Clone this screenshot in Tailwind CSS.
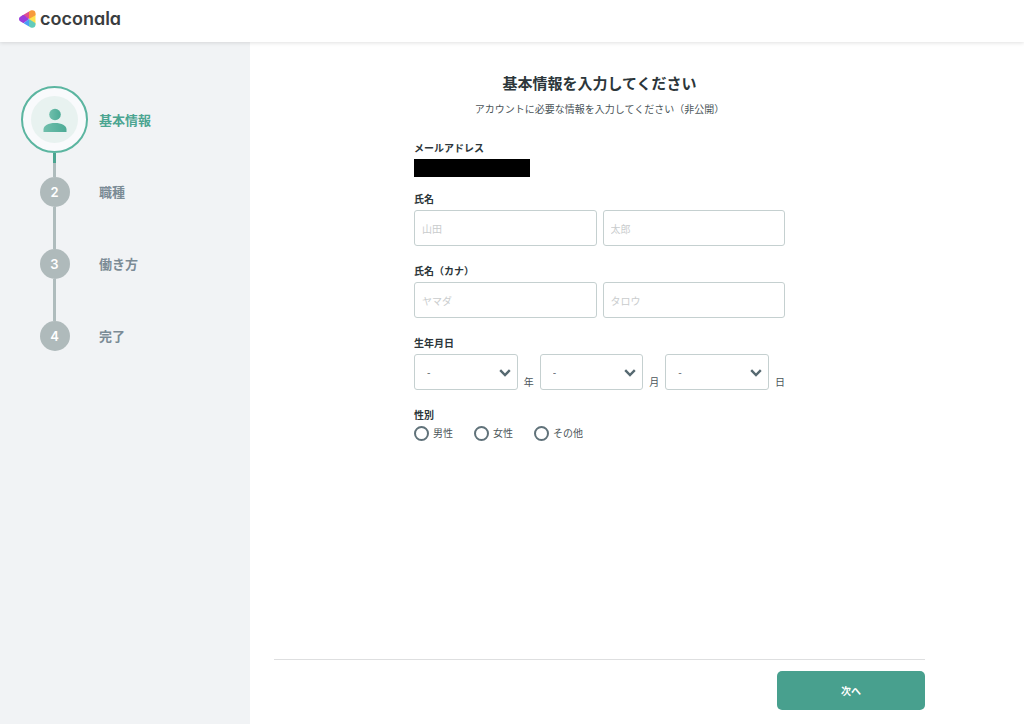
<!DOCTYPE html>
<html lang="ja">
<head>
<meta charset="utf-8">
<meta name="viewport" content="width=device-width, initial-scale=1">
<title>基本情報 - coconala</title>
<script src="https://cdn.jsdelivr.net/npm/@tailwindcss/browser@4"></script>
</head>
<body class="flex min-h-screen flex-col bg-white font-['Noto_Sans_CJK_JP',sans-serif] text-[10px] leading-4 text-[#4b5559]">
<header class="z-10 flex h-[42px] shrink-0 items-center bg-white px-[19px] pb-1 shadow-[0_1px_4px_rgba(0,0,0,0.12)]">
  <a href="#" class="flex items-center gap-1" aria-label="coconala">
    <svg class="h-[18px] w-[17px]" viewBox="0 0 17 18" aria-hidden="true">
      <defs><clipPath id="mark"><path d="M1.6 6.5 11.7.6C14-.6 16.5.8 16.5 3.3V14.8C16.5 17.3 14 18.6 11.7 17.4L1.6 11.6C-.5 10.3-.5 7.7 1.6 6.5Z"/></clipPath></defs>
      <g clip-path="url(#mark)">
        <path fill="#ffe14f" d="M10 9 17 3V15Z"/>
        <path fill="#e0508f" d="M0 6 10.200 0V9L5 6.300Z"/>
        <path fill="#f79a3c" d="M10 0H17V5L10 9Z"/>
        <path fill="#9a3ddb" d="M0 5.500 4.500 4.800 10 9 4.500 13.200 0 13Z"/>
        <path fill="#4a9df5" d="M4.500 13.200 10 9V18H6Z"/>
        <path fill="#62cbbb" d="M10 9 17 13.500V18H10Z"/>
      </g>
    </svg>
    <span class="font-['Inter',sans-serif] text-[18px] leading-5 font-semibold text-[#3a3d40] [font-feature-settings:'cv11']">coconala</span>
  </a>
</header>
<div class="flex flex-1">
  <nav class="w-[250px] shrink-0 bg-[#f1f3f5] pt-[42px] pl-[21px] text-[13px] font-bold text-[#7b8b95]" aria-label="登録ステップ">
    <ol>
      <li class="flex h-[72px] items-center gap-[11px] text-[#4ba591]" aria-current="step">
        <div class="flex h-full w-[67px] flex-col items-center pt-[2px]">
          <span class="flex size-[67px] shrink-0 items-center justify-center rounded-full border-2 border-[#5bb5a0] bg-[#f9fafc]">
            <span class="flex size-[47px] items-center justify-center rounded-full bg-[#e8f2f0]">
              <svg class="h-6 w-6" viewBox="0 0 24 24" aria-hidden="true">
                <defs><linearGradient id="person" x1="0" x2="1"><stop stop-color="#70bfac"/><stop offset="1" stop-color="#4dab96"/></linearGradient></defs>
                <circle cx="12" cy="6.500" r="5.800" fill="url(#person)"/>
                <path fill="url(#person)" d="M.500 24V21.500C.500 17.500 5.500 15 12 15S23.500 17.500 23.500 21.500V24Z"/>
              </svg>
            </span>
          </span>
          <span class="w-[3px] flex-1 bg-[#4ba591]"></span>
        </div>
        基本情報
      </li>
      <li class="flex h-[72px] items-center gap-[11px]">
        <div class="flex h-full w-[67px] flex-col items-center">
          <span class="h-[7px] w-[3px] bg-[#4ba591]"></span>
          <span class="w-[3px] flex-1 bg-[#afbcbd]"></span>
          <span class="flex size-[30px] items-center justify-center rounded-full bg-[#afbabb] font-['Inter',sans-serif] font-semibold text-white">2</span>
          <span class="h-[21px] w-[3px] bg-[#afbcbd]"></span>
        </div>
        職種
      </li>
      <li class="flex h-[72px] items-center gap-[11px]">
        <div class="flex h-full w-[67px] flex-col items-center">
          <span class="w-[3px] flex-1 bg-[#afbcbd]"></span>
          <span class="flex size-[30px] items-center justify-center rounded-full bg-[#afbabb] font-['Inter',sans-serif] font-semibold text-white">3</span>
          <span class="h-[21px] w-[3px] bg-[#afbcbd]"></span>
        </div>
        働き方
      </li>
      <li class="flex h-[72px] items-center gap-[11px]">
        <div class="flex h-full w-[67px] flex-col items-center">
          <span class="h-[21px] w-[3px] bg-[#afbcbd]"></span>
          <span class="flex size-[30px] items-center justify-center rounded-full bg-[#afbabb] font-['Inter',sans-serif] font-semibold text-white">4</span>
        </div>
        完了
      </li>
    </ol>
  </nav>
  <main class="min-w-0 flex-1 px-6">
    <form class="flex h-full max-w-[651px] flex-col">
      <div class="flex-1 pt-[29px]">
        <h1 class="text-center text-[15px] leading-6 font-bold text-[#2c363a]">基本情報を入力してください</h1>
        <p class="mt-[6px] text-center">アカウントに必要な情報を入力してください（非公開）</p>
        <div class="mx-auto mt-[23px] max-w-[371px]">
          <div>
            <div class="font-bold text-[#2c363a]">メールアドレス</div>
            <div class="mt-[3px] h-[18px] w-[116px] bg-black"></div>
          </div>
          <fieldset class="mt-[14px]">
            <legend class="font-bold text-[#2c363a]">氏名</legend>
            <div class="mt-[3px] flex gap-[6px]">
              <input type="text" aria-label="姓" placeholder="山田" class="h-9 w-full min-w-0 rounded-[3px] border border-[#c5d0d0] px-[7px] placeholder:text-[#c9cccd]">
              <input type="text" aria-label="名" placeholder="太郎" class="h-9 w-full min-w-0 rounded-[3px] border border-[#c5d0d0] px-[7px] placeholder:text-[#c9cccd]">
            </div>
          </fieldset>
          <fieldset class="mt-[17px]">
            <legend class="font-bold text-[#2c363a]">氏名（カナ）</legend>
            <div class="mt-[3px] flex gap-[6px]">
              <input type="text" aria-label="セイ" placeholder="ヤマダ" class="h-9 w-full min-w-0 rounded-[3px] border border-[#c5d0d0] px-[7px] placeholder:text-[#c9cccd]">
              <input type="text" aria-label="メイ" placeholder="タロウ" class="h-9 w-full min-w-0 rounded-[3px] border border-[#c5d0d0] px-[7px] placeholder:text-[#c9cccd]">
            </div>
          </fieldset>
          <fieldset class="mt-[17px]">
            <legend class="font-bold text-[#2c363a]">生年月日</legend>
            <div class="mt-[3px] flex gap-[6px]">
              <label class="flex flex-1 items-end gap-[6px]">
                <span class="relative flex-1">
                  <select class="block h-9 w-full appearance-none rounded-[3px] border border-[#c5d0d0] bg-white px-3"><option>-</option></select>
                  <svg class="pointer-events-none absolute top-[15px] right-[7px] h-2 w-3" viewBox="0 0 12 8" fill="none" stroke="#566971" stroke-width="2.400" aria-hidden="true"><path d="M1.200 1.200 6 6 10.800 1.200"/></svg>
                </span>年
              </label>
              <label class="flex flex-1 items-end gap-[6px]">
                <span class="relative flex-1">
                  <select class="block h-9 w-full appearance-none rounded-[3px] border border-[#c5d0d0] bg-white px-3"><option>-</option></select>
                  <svg class="pointer-events-none absolute top-[15px] right-[7px] h-2 w-3" viewBox="0 0 12 8" fill="none" stroke="#566971" stroke-width="2.400" aria-hidden="true"><path d="M1.200 1.200 6 6 10.800 1.200"/></svg>
                </span>月
              </label>
              <label class="flex flex-1 items-end gap-[6px]">
                <span class="relative flex-1">
                  <select class="block h-9 w-full appearance-none rounded-[3px] border border-[#c5d0d0] bg-white px-3"><option>-</option></select>
                  <svg class="pointer-events-none absolute top-[15px] right-[7px] h-2 w-3" viewBox="0 0 12 8" fill="none" stroke="#566971" stroke-width="2.400" aria-hidden="true"><path d="M1.200 1.200 6 6 10.800 1.200"/></svg>
                </span>日
              </label>
            </div>
          </fieldset>
          <fieldset class="mt-[17px]">
            <legend class="font-bold text-[#2c363a]">性別</legend>
            <div class="mt-[2px] flex gap-[21px]">
              <label class="flex items-center gap-1"><input type="radio" name="gender" class="size-[15px] appearance-none rounded-full border-2 border-[#60727a] checked:bg-[#60727a]">男性</label>
              <label class="flex items-center gap-1"><input type="radio" name="gender" class="size-[15px] appearance-none rounded-full border-2 border-[#60727a] checked:bg-[#60727a]">女性</label>
              <label class="flex items-center gap-1"><input type="radio" name="gender" class="size-[15px] appearance-none rounded-full border-2 border-[#60727a] checked:bg-[#60727a]">その他</label>
            </div>
          </fieldset>
        </div>
      </div>
      <div class="flex justify-end border-t border-[#dedfe0] pt-[11px] pb-[14px]">
        <button type="submit" class="h-[39px] w-[148px] rounded-[5px] bg-[#48a08e] font-bold text-white">次へ</button>
      </div>
    </form>
  </main>
</div>
</body>
</html>
